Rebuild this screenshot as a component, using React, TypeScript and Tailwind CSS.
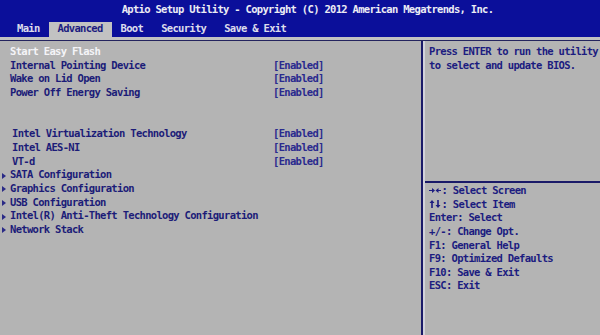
import React from 'react';

const FONT = "font-['DejaVu_Sans_Mono','Liberation_Mono',monospace] text-[10.5px] tracking-[-0.69px] font-bold";

const TABS = ['Main', 'Advanced', 'Boot', 'Security', 'Save & Exit'];

type Row = { label?: string; value?: string; sub?: boolean; selected?: boolean; indent?: boolean };

const ROWS: Row[] = [
  { label: 'Start Easy Flash', selected: true },
  { label: 'Internal Pointing Device', value: '[Enabled]' },
  { label: 'Wake on Lid Open', value: '[Enabled]' },
  { label: 'Power Off Energy Saving', value: '[Enabled]' },
  {},
  {},
  { label: 'Intel Virtualization Technology', value: '[Enabled]', indent: true },
  { label: 'Intel AES-NI', value: '[Enabled]', indent: true },
  { label: 'VT-d', value: '[Enabled]', indent: true },
  { label: 'SATA Configuration', sub: true },
  { label: 'Graphics Configuration', sub: true },
  { label: 'USB Configuration', sub: true },
  { label: 'Intel(R) Anti-Theft Technology Configuration', sub: true },
  { label: 'Network Stack', sub: true },
];

const HELP = [
  'Enter: Select',
  '+/-: Change Opt.',
  'F1: General Help',
  'F9: Optimized Defaults',
  'F10: Save & Exit',
  'ESC: Exit',
];

const Marker = () => (
  <svg width="4" height="6" viewBox="0 0 4 6" className="mt-[1px]">
    <path d="M0 0 L4 3 L0 6 Z" fill="#2a2a86" />
  </svg>
);

// filled arrow pairs used in the help legend
const LeftRight = () => (
  <svg width="12" height="7" viewBox="0 0 12 7" className="inline-block mr-[0.5px]">
    <path d="M0 3 H3 V1 L6 3.5 L3 6 V4 H0 Z" fill="#1c1c80" />
    <path d="M12 3 H9 V1 L6 3.5 L9 6 V4 H12 Z" fill="#1c1c80" transform="translate(0.5 0)" />
  </svg>
);

const UpDown = () => (
  <svg width="12" height="8" viewBox="0 0 12 8" className="inline-block mr-[0.5px]">
    <path d="M3 0 L5.5 3 H3.8 V8 H2.2 V3 H0.5 Z" fill="#1c1c80" />
    <path d="M9 8 L11.5 5 H9.8 V0 H8.2 V5 H6.5 Z" fill="#1c1c80" />
  </svg>
);

export default function App() {
  return (
    <div className={`w-[600px] h-[335px] overflow-hidden flex flex-col bg-[#b4b4b4] ${FONT}`}>
      {/* header */}
      <div className="h-[37px] bg-[#0b0f9a] flex flex-col shrink-0">
        <div className="h-[22px] leading-[18px] text-center pl-[15px] text-[#ececf4] whitespace-pre">
          Aptio Setup Utility - Copyright (C) 2012 American Megatrends, Inc.
        </div>
        <div className="h-[15px] flex pl-[8px]">
          {TABS.map(t => (
            <div
              key={t}
              className={`px-[9px] leading-[13px] whitespace-pre ${
                t === 'Advanced' ? 'bg-[#c2c2c2] text-[#1c1c80]' : 'text-[#dcdcec]'
              }`}
            >
              {t}
            </div>
          ))}
        </div>
      </div>
      <div className="h-[3px] bg-[#c2c2c2] shrink-0" />
      <div className="h-px bg-[#24245e] shrink-0" />

      {/* body */}
      <div className="flex flex-1 min-h-0">
        <div className="w-[421px] pt-[4px] pl-[2px]">
          {ROWS.map((r, i) => (
            <div key={i} className="h-[13.7px] leading-[13.7px] flex items-center whitespace-pre">
              <div className="w-[8px] flex items-center">{r.sub && <Marker />}</div>
              <div
                className={`w-[263px] ${r.indent ? 'pl-[2px]' : ''} ${
                  r.selected ? 'text-[#f4f4f8]' : 'text-[#1c1c78]'
                }`}
              >
                {r.label ?? ''}
              </div>
              {r.value && <div className="text-[#2a2a8e]">{r.value}</div>}
            </div>
          ))}
        </div>
        <div className="w-[2px] bg-[#1a1a68]" />
        <div className="w-[2px] bg-[#d2d2da]" />
        <div className="flex-1 flex flex-col">
          <div className="h-[140px] pt-[4px] pl-[4px] text-[#1c1c80] whitespace-pre">
            <div className="h-[13.7px] leading-[13.7px]">Press ENTER to run the utility</div>
            <div className="h-[13.7px] leading-[13.7px]">to select and update BIOS.</div>
          </div>
          <div className="h-[2px] bg-[#1a1a68]" />
          <div className="pt-[1px] pl-[4px] text-[#1c1c80] whitespace-pre">
            <div className="h-[13.65px] leading-[13.65px] flex items-center">
              <LeftRight />
              <span>: Select Screen</span>
            </div>
            <div className="h-[13.65px] leading-[13.65px] flex items-center">
              <UpDown />
              <span>: Select Item</span>
            </div>
            {HELP.map(h => (
              <div key={h} className="h-[13.65px] leading-[13.65px]">{h}</div>
            ))}
          </div>
        </div>
      </div>
    </div>
  );
}
